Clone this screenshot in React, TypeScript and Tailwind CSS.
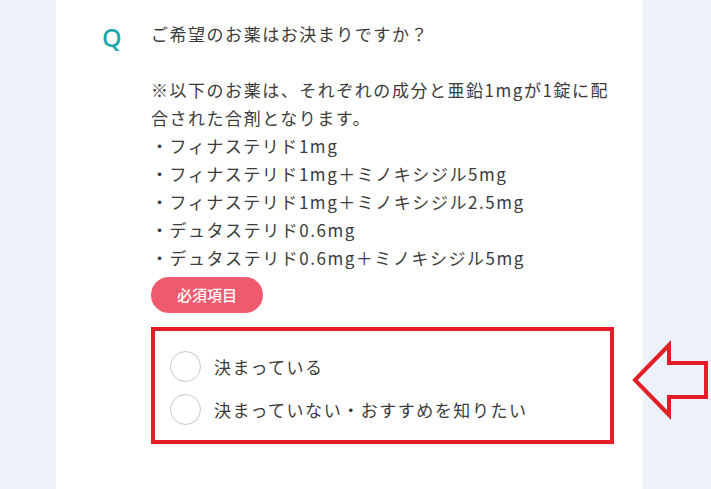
const OPTIONS = ['決まっている', '決まっていない・おすすめを知りたい'];

const LINES = [
  'ご希望のお薬はお決まりですか？',
  '',
  '※以下のお薬は、それぞれの成分と亜鉛1mgが1錠に配合された合剤となります。',
  '・フィナステリド1mg',
  '・フィナステリド1mg＋ミノキシジル5mg',
  '・フィナステリド1mg＋ミノキシジル2.5mg',
  '・デュタステリド0.6mg',
  '・デュタステリド0.6mg＋ミノキシジル5mg',
];

export default function App() {
  return (
    <div
      className="relative min-h-[489px] w-full overflow-hidden bg-[#edf1f9]"
      style={{ fontFamily: '"Noto Sans CJK JP", "Noto Sans", sans-serif' }}
    >
      {/* Question card */}
      <div className="ml-[56px] min-h-[489px] w-[587px] bg-white pl-[46px] pr-[28px] pt-[20px]">
        <div className="flex">
          <div className="w-[49px] shrink-0">
            <span
              className="mt-[3px] block text-[25px] font-medium leading-[28px] text-[#1aa7ae]"
              style={{ fontFamily: '"Noto Sans", sans-serif' }}
            >
              Q
            </span>
          </div>
          <div className="w-[464px]">
            <div className="text-[17px] leading-[28px] tracking-[0.09em] text-[#3b3b3b]">
              {LINES.map((line, i) => (
                <p key={i} className="min-h-[28px]">
                  {line}
                </p>
              ))}
            </div>

            <div className="mt-[5px] flex h-[36px] w-[112px] items-center justify-center rounded-full bg-[#f05a6e] text-[15px] font-medium text-white">
              必須項目
            </div>

            {/* Options */}
            <div className="relative mt-[14px] w-[463px] rounded-[4px] border border-[#e3e6ea] pb-[18px] pl-[18px] pt-[23px] shadow-[0_2px_3px_rgba(0,0,0,0.06)]">
              <div className="flex flex-col gap-[12px]">
                {OPTIONS.map((opt) => (
                  <label key={opt} className="flex items-center gap-[13px]">
                    <span className="h-[31px] w-[31px] shrink-0 rounded-full border-[1.5px] border-[#c9c9c9] bg-white" />
                    <span className="text-[17px] leading-[28px] tracking-[0.09em] text-[#3b3b3b]">
                      {opt}
                    </span>
                  </label>
                ))}
              </div>
              {/* annotation frame */}
              <div className="pointer-events-none absolute inset-[-1px] border-4 border-[#e41e26]" />
            </div>
          </div>
        </div>
      </div>

      {/* annotation arrow */}
      <svg
        className="pointer-events-none absolute left-0 top-0"
        width="711"
        height="489"
        viewBox="0 0 711 489"
      >
        <polygon
          points="635,380 669,345 669,363 706,363 706,397 669,397 669,415"
          fill="none"
          stroke="#e41e26"
          strokeWidth="4"
          strokeLinejoin="miter"
        />
      </svg>
    </div>
  );
}
